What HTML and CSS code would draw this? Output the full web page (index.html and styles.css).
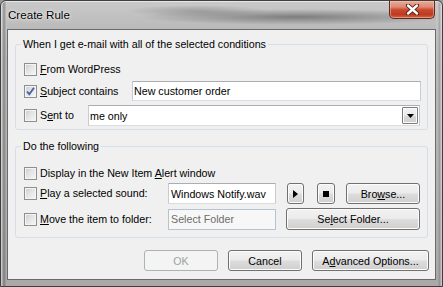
FILE: index.html
```html
<!DOCTYPE html>
<html>
<head>
<meta charset="utf-8">
<title>Create Rule</title>
<link rel="stylesheet" href="styles.css">
</head>
<body>
<div class="window">
  <div class="titlebar">
    <span class="title">Create Rule</span>
    <div class="close">
      <svg width="15" height="11" viewBox="0 0 15 11"><path d="M3 1.5 L12 9.5 M12 1.5 L3 9.5" stroke="#4a1a12" stroke-width="4.2" stroke-linecap="round" fill="none"/><path d="M3 1.5 L12 9.5 M12 1.5 L3 9.5" stroke="#ffffff" stroke-width="2.4" stroke-linecap="round" fill="none"/></svg>
    </div>
  </div>
  <div class="client">
    <fieldset class="group g1">
      <legend>When I get e-mail with all of the selected conditions</legend>
      <div class="row r1">
        <label class="check"><span class="box"></span><span class="txt"><u>F</u>rom WordPress</span></label>
      </div>
      <div class="row r2">
        <label class="check w-subject"><span class="box on"><svg width="11" height="11" viewBox="0 0 11 11"><path d="M2 5.5 L4.3 8.3 L9 1.8" stroke="#4a62a0" stroke-width="1.9" fill="none"/></svg></span><span class="txt"><u>S</u>ubject contains</span></label>
        <div class="field grow">New customer order</div>
      </div>
      <div class="row r3">
        <label class="check w-sent"><span class="box"></span><span class="txt">S<u>e</u>nt to</span></label>
        <div class="field combo grow"><span class="combo-text">me only</span><span class="drop"><svg width="7" height="4" viewBox="0 0 7 4"><polygon points="0,0 7,0 3.5,4" fill="#000"/></svg></span></div>
      </div>
    </fieldset>

    <fieldset class="group g2">
      <legend>Do the following</legend>
      <div class="row q1">
        <label class="check"><span class="box"></span><span class="txt">Display in the New Item <u>A</u>lert window</span></label>
      </div>
      <div class="row q2">
        <label class="check w-action"><span class="box"></span><span class="txt"><u>P</u>lay a selected sound:</span></label>
        <div class="field w-file">Windows Notify.wav</div>
        <div class="btn mini play"><svg width="5" height="8" viewBox="0 0 5 8"><polygon points="0,0 5,4 0,8" fill="#000"/></svg></div>
        <div class="btn mini stop"><span class="sq"></span></div>
        <div class="btn browse">Bro<u>w</u>se...</div>
      </div>
      <div class="row q3">
        <label class="check w-action"><span class="box"></span><span class="txt"><u>M</u>ove the item to folder:</span></label>
        <div class="field w-file disabled">Select Folder</div>
        <div class="btn selfolder">Se<u>l</u>ect Folder...</div>
      </div>
    </fieldset>

    <div class="actions">
      <div class="btn dlg disabled">OK</div>
      <div class="btn dlg">Cancel</div>
      <div class="btn adv">A<u>d</u>vanced Options...</div>
    </div>
  </div>
</div>
</body>
</html>
```
FILE: styles.css
```css
* { box-sizing: border-box; }
html, body { margin: 0; padding: 0; }
body {
  width: 443px;
  height: 287px;
  overflow: hidden;
  font-family: "Liberation Sans", Arial, sans-serif;
  font-size: 10.7px;
  color: #000;
  background: #9a9a9a;
}
u { text-decoration: underline; text-underline-offset: 1px; text-decoration-thickness: 1px; }

.window {
  width: 443px;
  height: 287px;
  border: 1px solid #3f3f3f;
  border-radius: 6px 6px 0 0;
  padding: 0 6px 6px 6px;
  display: flex;
  flex-direction: column;
  background:
    linear-gradient(to right, rgba(255,255,255,.35) 0 1px, rgba(60,60,60,.3) 2px 4px, transparent 5px),
    linear-gradient(to left, rgba(255,255,255,.3) 0 1px, rgba(60,60,60,.2) 2px 3px, transparent 4px),
    linear-gradient(to bottom, #c9c9c9 0%, #bababa 20%, #b3b3b3 60%, #a9a9a9 100%);
  box-shadow: inset 0 1px 0 #e6e6e6;
}

.titlebar {
  height: 28px;
  display: flex;
  justify-content: space-between;
  align-items: flex-start;
  padding-left: 1px;
  background:
    radial-gradient(ellipse 160px 8px at 290px 16px, rgba(70,70,70,.55), rgba(70,70,70,0) 100%),
    radial-gradient(ellipse 70px 6px at 190px 10px, rgba(90,90,90,.35), rgba(90,90,90,0) 100%),
    linear-gradient(to bottom, rgba(0,0,0,0) 0%, rgba(0,0,0,.04) 100%);
}
.title {
  margin-top: 6px;
  font-size: 11.6px;
  line-height: 15px;
  color: #000;
  text-shadow: 0 0 5px rgba(255,255,255,.9), 0 0 2px rgba(255,255,255,.8);
}
.close {
  width: 46px;
  height: 18px;
  margin-right: 1px;
  border: 1px solid #5b2a20;
  border-top: none;
  border-radius: 0 0 5px 5px;
  background: linear-gradient(to bottom, #eaa996 0%, #de8a74 35%, #c9482d 52%, #bf3a1e 80%, #d4654a 100%);
  box-shadow: inset 0 0 0 1px rgba(255,210,200,.45);
  display: flex;
  align-items: center;
  justify-content: center;
}

.client {
  height: 251px;
  border: 1px solid #6a6a6a;
  background: #f0f0f0;
  display: flex;
  flex-direction: column;
}

.group {
  margin: 7px 7px 0 7px;
  padding: 8px 6px 3px 8px;
  border: 1px solid #d5dfe5;
  border-radius: 3px;
  min-width: 0;
}
.group legend {
  padding: 0 2px;
  margin-left: -3px;
  line-height: 14px;
}
.g2 { margin-top: 9px; padding-top: 10px; padding-bottom: 7px; }

.row { display: flex; align-items: center; }
.r1 { height: 20px; }
.r2 { height: 20px; margin-top: 2px; }
.r3 { height: 21px; margin-top: 4px; }
.q1 { height: 20px; }
.q2 { height: 21px; }
.q3 { height: 22px; margin-top: 4px; }

.check {
  display: flex;
  align-items: center;
  flex: none;
  line-height: 13px;
}
.w-subject { width: 108px; }
.w-sent { width: 64px; }
.w-action { width: 144px; }

.box {
  width: 13px;
  height: 13px;
  flex: none;
  border: 1px solid #8e8f8f;
  background: linear-gradient(135deg, #c9ccd1 0%, #e3e4e6 45%, #f7f7f7 100%);
  box-shadow: inset 0 0 0 1px #f4f4f4;
  display: flex;
  align-items: center;
  justify-content: center;
}
.box svg { display: block; }
.txt { margin-left: 3px; white-space: nowrap; }

.field {
  height: 100%;
  border: 1px solid;
  border-color: #abadb3 #c8ccd2 #d8dde3 #c8ccd2;
  background: #fff;
  padding-left: 2px;
  display: flex;
  align-items: center;
  white-space: nowrap;
  overflow: hidden;
}
.grow { flex: 1; }
.r2 .field { height: 20px; padding-left: 1px; }
.combo { margin-right: 1px; padding-left: 1px; justify-content: space-between; }
.combo-text { flex: 1; }
.drop {
  width: 16px;
  height: 17px;
  margin-right: 1px;
  border: 1px solid #7c7c7c;
  border-radius: 1px;
  background: linear-gradient(to bottom, #f3f3f3 0%, #e9e9e9 50%, #d9d9d9 51%, #cfcfcf 100%);
  box-shadow: inset 0 0 0 1px #fbfbfb;
  display: flex;
  align-items: center;
  justify-content: center;
}
.drop svg { display: block; margin-top: 1px; }

.w-file { width: 108px; flex: none; height: 21px; }
.field.disabled {
  background: #f7f7f7;
  border-color: #b7c3d0;
  color: #6d6d6d;
}

.btn {
  height: 21px;
  border: 1px solid #707070;
  border-radius: 3px;
  background: linear-gradient(to bottom, #f2f2f2 0%, #ebebeb 48%, #dddddd 52%, #cfcfcf 100%);
  box-shadow: inset 0 0 0 1px #fcfcfc;
  display: flex;
  align-items: center;
  justify-content: center;
  white-space: nowrap;
  flex: none;
}
.btn svg { display: block; }
.mini { width: 17px; }
.play { margin-left: 11px; }
.stop { width: 18px; margin-left: 13px; }
.sq { width: 6px; height: 6px; background: #000; display: block; }
.browse { width: 74px; margin-left: 11px; }
.selfolder { width: 134px; margin-left: 10px; height: 22px; }

.actions {
  display: flex;
  justify-content: flex-end;
  gap: 10px;
  margin-top: 12px;
  padding-right: 6px;
}
.dlg { width: 74px; }
.adv { width: 117px; }
.btn.disabled {
  border-color: #adb2b5;
  background: #f4f4f4;
  box-shadow: none;
  color: #a0a0a0;
}
```
